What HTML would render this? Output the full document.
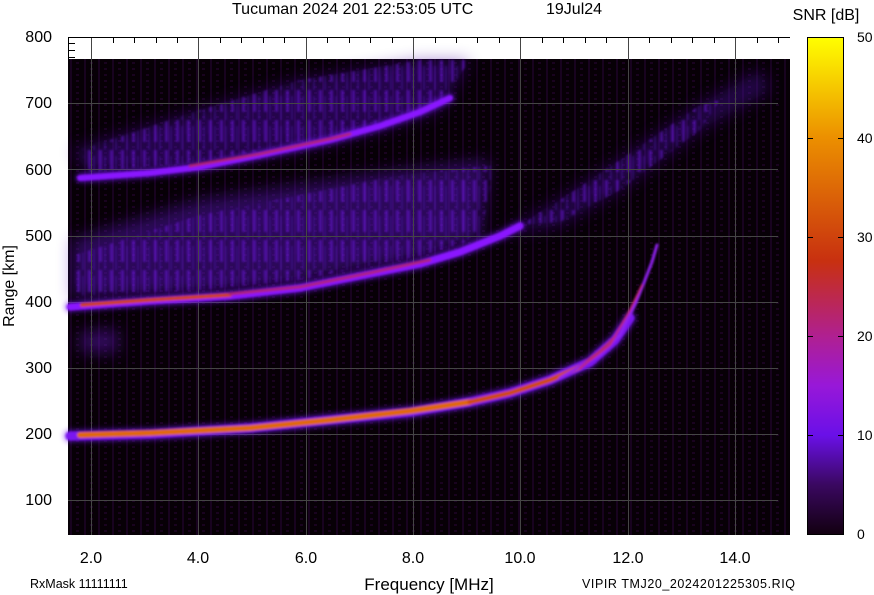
<!DOCTYPE html>
<html><head><meta charset="utf-8"><style>
html,body{margin:0;padding:0;background:#fff;width:874px;height:595px;overflow:hidden}
text{font-family:"Liberation Sans",sans-serif;fill:#000}
</style></head><body>
<svg width="874" height="595" viewBox="0 0 874 595" xmlns="http://www.w3.org/2000/svg">
<defs>
<linearGradient id="cb" x1="0" y1="1" x2="0" y2="0">
<stop offset="0" stop-color="#120010"/>
<stop offset="0.1" stop-color="#3a0860"/>
<stop offset="0.2" stop-color="#6a10e8"/>
<stop offset="0.3" stop-color="#9818d8"/>
<stop offset="0.4" stop-color="#b02090"/>
<stop offset="0.55" stop-color="#c83010"/>
<stop offset="0.8" stop-color="#ec9000"/>
<stop offset="1" stop-color="#ffff00"/>
</linearGradient>
<filter id="b1" x="-20%" y="-50%" width="140%" height="200%"><feGaussianBlur stdDeviation="1"/></filter>
<filter id="b3" x="-20%" y="-50%" width="140%" height="200%"><feGaussianBlur stdDeviation="3"/></filter>
<filter id="b8" x="-20%" y="-50%" width="140%" height="200%"><feGaussianBlur stdDeviation="8"/></filter>
<pattern id="stripes" width="14" height="6" patternUnits="userSpaceOnUse">
<rect x="0" y="0" width="2" height="6" fill="#2a0638" opacity="0.5"/>
<rect x="6" y="2" width="3" height="2" fill="#240530" opacity="0.6"/>
</pattern>
<pattern id="vstr" width="11" height="30" patternUnits="userSpaceOnUse">
<rect x="0" y="0" width="3" height="22" fill="#7a18ff" opacity="0.8"/>
<rect x="5" y="6" width="2" height="24" fill="#5a10d0" opacity="0.6"/>
<rect x="9" y="0" width="1" height="14" fill="#4a0ca0" opacity="0.5"/>
</pattern>
</defs>

<text x="232" y="14" font-size="16">Tucuman 2024 201 22:53:05 UTC</text>
<text x="546" y="14" font-size="16">19Jul24</text>
<text x="826" y="20" font-size="16" text-anchor="middle">SNR [dB]</text>

<rect x="68" y="37" width="722" height="22" fill="#fff"/>
<rect x="68" y="59" width="722" height="476" fill="#070006"/>
<rect x="68" y="59" width="722" height="476" fill="url(#stripes)"/>

<!-- haze -->
<g filter="url(#b8)" opacity="0.45">
<polygon points="72,150 200,110 300,80 420,60 470,60 440,110 380,130 300,150 200,165 90,175" fill="#4a0ca0"/>
<polygon points="72,240 200,200 300,185 400,170 490,160 480,240 420,258 300,282 200,292 72,298" fill="#5a12c0"/>
<polygon points="500,235 560,200 620,160 700,105 760,70 770,90 700,130 620,190 560,225" fill="#4a0ca0"/>
<polygon points="80,332 118,330 118,352 80,352" fill="#6a18d0"/>
</g>
<g opacity="0.55" filter="url(#b1)">
<polygon points="80,150 200,110 300,80 420,60 470,60 440,105 380,125 300,145 200,162 90,172" fill="url(#vstr)"/>
<polygon points="75,255 200,215 300,195 400,175 495,165 480,238 420,256 300,280 200,290 75,296" fill="url(#vstr)"/>
<polygon points="520,225 560,200 620,160 700,105 720,100 700,130 620,190 560,222" fill="url(#vstr)"/>
</g>

<g stroke="#454545" stroke-width="1">
<line x1="91.5" y1="37" x2="91.5" y2="535"/><line x1="198.5" y1="37" x2="198.5" y2="535"/><line x1="306.5" y1="37" x2="306.5" y2="535"/><line x1="413.5" y1="37" x2="413.5" y2="535"/><line x1="520.5" y1="37" x2="520.5" y2="535"/><line x1="628.5" y1="37" x2="628.5" y2="535"/><line x1="735.5" y1="37" x2="735.5" y2="535"/>
<line x1="68" y1="103.5" x2="778" y2="103.5"/><line x1="68" y1="169.5" x2="778" y2="169.5"/><line x1="68" y1="236.5" x2="778" y2="236.5"/><line x1="68" y1="302.5" x2="778" y2="302.5"/><line x1="68" y1="368.5" x2="778" y2="368.5"/><line x1="68" y1="434.5" x2="778" y2="434.5"/><line x1="68" y1="500.5" x2="778" y2="500.5"/>
</g>
<g stroke="#000" stroke-width="1">
<line x1="68" y1="37.5" x2="790" y2="37.5"/>
<line x1="68.5" y1="37" x2="68.5" y2="59"/>
<line x1="68" y1="43.5" x2="75" y2="43.5"/><line x1="68" y1="50.5" x2="75" y2="50.5"/><line x1="68" y1="57.5" x2="75" y2="57.5"/>
<path d="M113.5 37v6M134.5 37v6M156.5 37v6M177.5 37v6M220.5 37v6M241.5 37v6M263.5 37v6M284.5 37v6M327.5 37v6M349.5 37v6M370.5 37v6M392.5 37v6M435.5 37v6M456.5 37v6M477.5 37v6M499.5 37v6M542.5 37v6M563.5 37v6M585.5 37v6M606.5 37v6M649.5 37v6M671.5 37v6M692.5 37v6M714.5 37v6M757.5 37v6M778.5 37v6"/>
</g>

<g fill="none" stroke-linecap="round" stroke-linejoin="round">
<g filter="url(#b3)" stroke="#7018f0" opacity="0.6">
<polyline stroke-width="9" points="80,178 150,173 200,167 260,155 330,140 380,126 420,112 450,98"/>
<polyline stroke-width="10" points="70,307 150,301 230,296 300,288 370,274 420,264 460,252 500,236 520,226"/>
<polyline stroke-width="12" points="70,436 150,434 250,428 330,420 410,412 470,402 510,393 550,380 590,362 615,340 630,318"/>
</g>
<g filter="url(#b1)">
<polyline stroke="#8a18ff" stroke-width="6" points="80,178 150,173 200,167 260,155 330,140 380,126 420,112 450,98"/>
<polyline stroke="#b02470" stroke-width="3" points="190,166 260,154 330,139 350,134"/>
<polyline stroke="#8a18ff" stroke-width="7" points="70,307 150,301 230,296 300,288 370,274 420,264 460,252 500,236 520,226"/>
<polyline stroke="#d04010" stroke-width="4" points="82,305 150,300 230,295"/>
<polyline stroke="#b02470" stroke-width="3" points="230,294 300,287 370,273 430,260"/>
<polyline stroke="#7a14f0" stroke-width="9" points="70,436 150,434 250,428 330,420 410,412 470,402 510,393 550,380 590,362 615,340 630,318"/>
<polyline stroke="#e06808" stroke-width="6" points="80,435 150,433 250,428 330,420 410,411 470,402"/>
<polyline stroke="#d04810" stroke-width="5" points="470,402 510,393 550,380 580,367"/>
<polyline stroke="#b02870" stroke-width="4" points="580,367 600,352 615,338"/>
<polyline stroke="#9020f0" stroke-width="3" points="560,378 600,355 620,335 635,305 645,280 652,262 657,245"/>
<polyline stroke="#c02870" stroke-width="2" points="580,368 610,345 630,310 642,285"/>
</g>
</g>

<g font-size="16" text-anchor="end">
<text x="52" y="42">800</text><text x="52" y="108">700</text><text x="52" y="175">600</text><text x="52" y="241">500</text><text x="52" y="307">400</text><text x="52" y="373">300</text><text x="52" y="439">200</text><text x="52" y="505">100</text>
</g>
<text transform="translate(14,286) rotate(-90)" font-size="16" text-anchor="middle">Range [km]</text>
<g font-size="16" text-anchor="middle">
<text x="91" y="563">2.0</text><text x="198" y="563">4.0</text><text x="306" y="563">6.0</text><text x="413" y="563">8.0</text><text x="520" y="563">10.0</text><text x="628" y="563">12.0</text><text x="735" y="563">14.0</text>
</g>
<text x="429" y="590" font-size="17" text-anchor="middle">Frequency [MHz]</text>
<text x="30" y="588" font-size="12.5">RxMask 11111111</text>
<text x="582" y="588" font-size="12.5" textLength="213">VIPIR  TMJ20_2024201225305.RIQ</text>

<rect x="807.5" y="37.5" width="36" height="497" fill="url(#cb)" stroke="#000"/>
<g stroke="#000"><path d="M808 138.5h5M838 138.5h5M808 237.5h5M838 237.5h5M808 336.5h5M838 336.5h5M808 435.5h5M838 435.5h5"/></g>
<g font-size="14">
<text x="857" y="42">50</text><text x="857" y="143">40</text><text x="857" y="242">30</text><text x="857" y="341">20</text><text x="857" y="440">10</text><text x="857" y="539">0</text>
</g>
</svg>
</body></html>
